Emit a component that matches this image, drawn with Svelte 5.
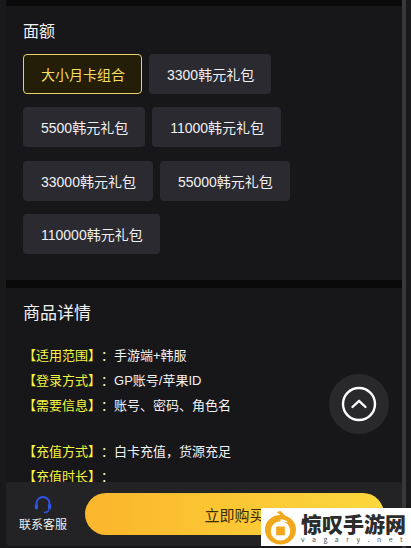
<script lang="ts">
	const options = [
		'大小月卡组合',
		'3300韩元礼包',
		'5500韩元礼包',
		'11000韩元礼包',
		'33000韩元礼包',
		'55000韩元礼包',
		'110000韩元礼包'
	];
	const details = [
		{ label: '【适用范围】', value: '手游端+韩服' },
		{ label: '【登录方式】', value: 'GP账号/苹果ID' },
		{ label: '【需要信息】', value: '账号、密码、角色名' },
		{ label: '', value: '' },
		{ label: '【充值方式】', value: '白卡充值，货源充足' },
		{ label: '【充值时长】', value: '' }
	];
	let selected = $state(0);
</script>

<div class="page">
	<main class="content">
		<section class="card amounts">
			<h2>面额</h2>
			<div class="options">
				{#each options as option, i}
					<button type="button" class:active={selected === i} onclick={() => (selected = i)}>{option}</button>
				{/each}
			</div>
		</section>

		<section class="card details">
			<h2>商品详情</h2>
			<div class="lines">
				{#each details as line}
					<p>
						{#if line.label}
							<span class="label">{line.label}</span><span class="colon">：</span>{line.value}
						{/if}
					</p>
				{/each}
			</div>
		</section>
	</main>

	<button type="button" class="to-top" aria-label="回到顶部">
		<svg viewBox="0 0 36 36" width="36" height="36" fill="none" stroke="#fff">
			<circle cx="18" cy="18" r="16" stroke-width="2.4" />
			<path d="M11.500 21 18 14.800 24.500 21" stroke-width="2.400" stroke-linecap="round" stroke-linejoin="round" />
		</svg>
	</button>

	<footer class="bar">
		<div class="service">
			<svg viewBox="0 0 20 20" width="20" height="20" fill="none" stroke="#2f55e8">
				<path d="M3.500 12V8.500a6.500 6.500 0 0 1 13 0V12" stroke-width="1.900" />
				<rect x="1.800" y="9" width="3.200" height="5.400" rx="1.300" fill="#2f55e8" stroke="none" />
				<rect x="15" y="9" width="3.200" height="5.400" rx="1.300" fill="#2f55e8" stroke="none" />
				<path d="M16 14.500c-.6 2-2.600 3-5 3" stroke-width="1.400" />
			</svg>
			<span>联系客服</span>
		</div>
		<button type="button" class="buy">立即购买</button>
	</footer>

	<aside class="watermark">
		<svg viewBox="0 0 34 36" width="33" height="35">
			<path d="M17 5C8 5 1 11.500 1 20s7 15.500 16 15.500S33 28.500 33 20c0-7-5-12-11-14l-5-5-4 1 4 3Z" fill="#f2a81d" />
			<path d="M17 9.500c3 0 6 1 8 3.500-2-.8-5-1.200-8-.8Z" fill="#fff" />
			<circle cx="17" cy="21.500" r="10" fill="#fff" />
			<rect x="12.500" y="17" width="9" height="9" fill="#f2a81d" />
		</svg>
		<div class="mark-text">
			<strong>惊叹手游网</strong>
			<small>vagary.net</small>
		</div>
	</aside>
</div>

<style>
	:global(body) {
		margin: 0;
		background: #17171a;
	}

	.page {
		position: relative;
		height: 548px;
		overflow: hidden;
		font-family: "Liberation Sans", "Noto Sans CJK SC", sans-serif;
		color: #f2f2f4;
		background: #19191b;
	}

	.content {
		margin: 0 5px 0 6px;
		height: 548px;
		background: #0a0a0b;
		padding-top: 6px;
		box-sizing: border-box;
		display: flex;
		flex-direction: column;
		gap: 8px;
		border-right: 4px solid #38383a;
	}

	.card {
		background: #17171a;
		padding: 0 17px;
	}

	h2 {
		margin: 0;
		font-weight: 400;
		color: #f2f2f4;
	}

	.amounts {
		height: 274px;
		box-sizing: border-box;
		padding-top: 15px;
	}

	.amounts h2 {
		font-size: 16px;
		line-height: 22px;
	}

	.options {
		margin-top: 11px;
		display: flex;
		flex-wrap: wrap;
		gap: 13.400px 7px;
	}

	.options button {
		height: 40px;
		padding: 0 17px 0 18px;
		border: 0;
		border-radius: 4px;
		background: #2a2a30;
		color: #f0f0f2;
		font: inherit;
		font-size: 14px;
	}

	.options button.active {
		box-sizing: border-box;
		padding: 0 16px 0 17px;
		border: 1px solid #e9d268;
		background: #241d07;
		color: #f8de60;
	}

	.details {
		flex: 1;
		padding-top: 14px;
	}

	.details h2 {
		font-size: 17px;
		line-height: 24px;
	}

	.lines {
		margin-top: 17px;
		font-size: 13px;
	}

	.lines p {
		margin: 0;
		height: 25px;
		line-height: 25px;
		white-space: nowrap;
	}

	.lines p:nth-child(4) {
		height: 21px;
	}

	.label {
		color: #f6f640;
	}

	.colon {
		display: inline-block;
		width: 13px;
		color: #f4f4c8;
	}

	.to-top {
		position: absolute;
		left: 329px;
		top: 374px;
		width: 60px;
		height: 60px;
		padding: 0;
		border: 0;
		border-radius: 50%;
		background: #29292c;
		display: flex;
		align-items: center;
		justify-content: center;
	}

	.bar {
		position: absolute;
		left: 6px;
		right: 9px;
		top: 482px;
		height: 64px;
		border-radius: 4px;
		background: #232326;
		display: flex;
		align-items: center;
		gap: 18px;
		padding: 0 18px 0 13px;
		box-sizing: border-box;
	}

	.service {
		display: flex;
		flex-direction: column;
		align-items: center;
		font-size: 12px;
		line-height: 16px;
		width: 48px;
		flex: none;
		gap: 2px;
		color: #eee;
	}

	.buy {
		flex: 1;
		height: 42px;
		border: 0;
		border-radius: 21px;
		background: linear-gradient(90deg, #fbb62c, #fbd83c);
		color: #3a2a08;
		font: inherit;
		font-size: 15px;
	}

	.watermark {
		position: absolute;
		left: 261px;
		top: 508px;
		width: 150px;
		height: 38px;
		background: #fff;
		display: flex;
		align-items: center;
		gap: 4px;
		padding-left: 3px;
		box-sizing: border-box;
	}

	.mark-text {
		display: flex;
		flex-direction: column;
		font-family: "Noto Sans CJK SC", "Liberation Serif", serif;
		color: #2c2c2c;
	}

	.mark-text strong {
		font-size: 21px;
		line-height: 24px;
		font-weight: 900;
		white-space: nowrap;
	}

	.mark-text small {
		font-size: 7px;
		line-height: 9px;
		letter-spacing: 7.500px;
		color: #555;
		white-space: nowrap;
	}
</style>
